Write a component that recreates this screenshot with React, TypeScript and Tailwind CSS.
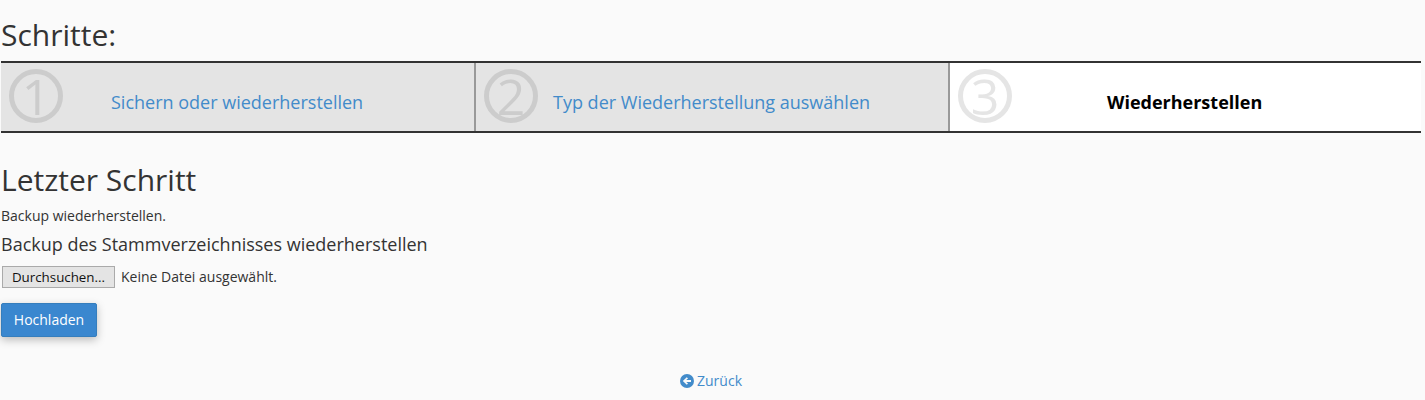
const font = "font-['Open_Sans',sans-serif]";

const steps = [
    { num: "1", text: "Sichern oder wiederherstellen", active: false, pad: "pl-[48px]", end: false },
    { num: "2", text: "Typ der Wiederherstellung auswählen", active: false, pad: "pl-[15px]", end: false },
    { num: "3", text: "Wiederherstellen", active: true, pad: "pl-[95px]", end: true },
];

function StepNumber({ num, active }: { num: string; active: boolean }) {
    return (
        <div
            className={`flex h-[54px] w-[54px] shrink-0 items-center justify-center rounded-full border-[5px] text-[50px] font-medium leading-none ${
                active ? "border-[#e5e5e5] text-[#e5e5e5]" : "border-[#cccccc] text-[#cccccc]"
            }`}
        >
            {num}
        </div>
    );
}

export default function App() {
    return (
        <div className={`${font} h-[400px] w-[1425px] overflow-hidden bg-[#fafafa] pl-px pr-[4px] text-[#333333]`}>
            <h2 className="pt-[17px] text-[30px] leading-[36px]">Schritte:</h2>
            <div className="mt-[8px] grid h-[72px] grid-cols-[475px_474px_1fr] border-y-2 border-[#333333]">
                {steps.map((s) => (
                    <div
                        key={s.num}
                        className={`flex items-start pl-[8px] pt-[6px] ${s.active ? "bg-white" : "bg-[#e4e4e4]"} ${
                            s.end ? "" : "border-r-2 border-[#999999]"
                        }`}
                    >
                        <StepNumber num={s.num} active={s.active} />
                        <span
                            className={`${s.pad} pt-[21px] text-[18px] leading-[24px] ${
                                s.active ? "font-bold text-black" : "text-[#428bca]"
                            }`}
                        >
                            {s.text}
                        </span>
                    </div>
                ))}
            </div>
            <h2 className="mt-[27px] text-[30px] leading-[40px]">Letzter Schritt</h2>
            <p className="mt-[6px] text-[14px] leading-[20px]">Backup wiederherstellen.</p>
            <h3 className="mt-[6px] text-[18px] leading-[24px]">Backup des Stammverzeichnisses wiederherstellen</h3>
            <div className="mt-[10px] flex items-center text-[14px] leading-[22px]">
                <button className="ml-px h-[22px] w-[113px] border border-[#aaaaaa] bg-[#e4e4e4] text-[13.33px] leading-[20px] text-[#111111]">
                    Durchsuchen...
                </button>
                <span className="ml-[6px]">Keine Datei ausgewählt.</span>
            </div>
            <button className="mt-[15px] h-[34px] w-[96px] rounded-[2px] border border-[#357ebd] bg-[#3a87cf] pb-[2px] text-[14px] text-white shadow-[0_3px_8px_rgba(0,0,0,0.25)]">
                Hochladen
            </button>
            <div className="mt-[34px] flex items-center justify-center gap-[3px] text-[14px] leading-[20px] text-[#428bca]">
                <svg viewBox="0 0 14 14" className="h-[14px] w-[14px]">
                    <circle cx="7" cy="7" r="7" fill="#428bca" />
                    <path d="M2.8 7 L6.8 3.2 L8 4.4 L6.2 6 H11 V8 H6.2 L8 9.6 L6.8 10.8 Z" fill="#fafafa" />
                </svg>
                <span>Zurück</span>
            </div>
        </div>
    );
}
